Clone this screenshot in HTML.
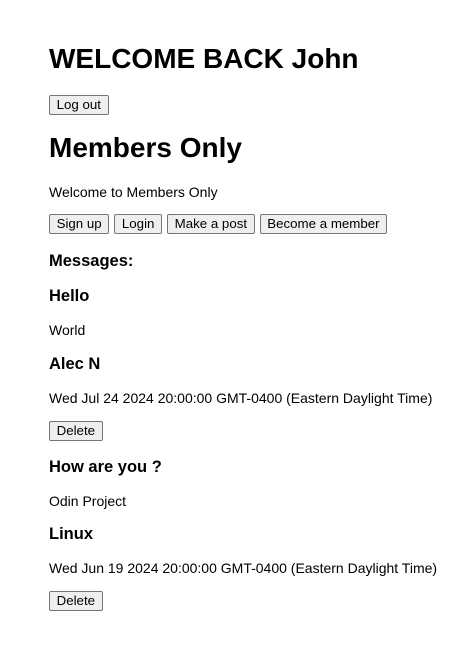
<!DOCTYPE html>
<html><head><meta charset="utf-8"><style>
html,body{margin:0;padding:0;background:#fff;width:473px;height:647px;overflow:hidden}
body{font-family:"Liberation Sans",Arial,sans-serif;color:#000;position:relative}
.a{position:absolute;left:49px;white-space:nowrap}
.t{font-size:14px;line-height:20px}
.h1{font-size:28px;font-weight:bold;line-height:34px}
.h3{font-size:16.5px;font-weight:bold;line-height:20px}
.b{display:flex;gap:5px}
button{font-family:"Liberation Sans",Arial,sans-serif;font-size:13.3px;height:20px;padding:0 6.6px;background:#efefef;border:1px solid #767676;border-radius:2px;color:#000;line-height:18px;margin:0}
</style></head><body>
<div class="a h1" style="top:42px">WELCOME BACK John</div>
<div class="a b" style="top:95px"><button>Log out</button></div>
<div class="a h1" style="top:131px">Members Only</div>
<div class="a t" style="top:182px">Welcome to Members Only</div>
<div class="a b" style="top:214px"><button>Sign up</button><button>Login</button><button>Make a post</button><button>Become a member</button></div>
<div class="a h3" style="top:251px">Messages:</div>
<div class="a h3" style="top:286px">Hello</div>
<div class="a t" style="top:320px">World</div>
<div class="a h3" style="top:354px">Alec N</div>
<div class="a t" style="top:388px">Wed Jul 24 2024 20:00:00 GMT-0400 (Eastern Daylight Time)</div>
<div class="a b" style="top:421px"><button>Delete</button></div>
<div class="a h3" style="top:457px">How are you ?</div>
<div class="a t" style="top:491px">Odin Project</div>
<div class="a h3" style="top:524px">Linux</div>
<div class="a t" style="top:558px">Wed Jun 19 2024 20:00:00 GMT-0400 (Eastern Daylight Time)</div>
<div class="a b" style="top:591px"><button>Delete</button></div>
</body></html>
